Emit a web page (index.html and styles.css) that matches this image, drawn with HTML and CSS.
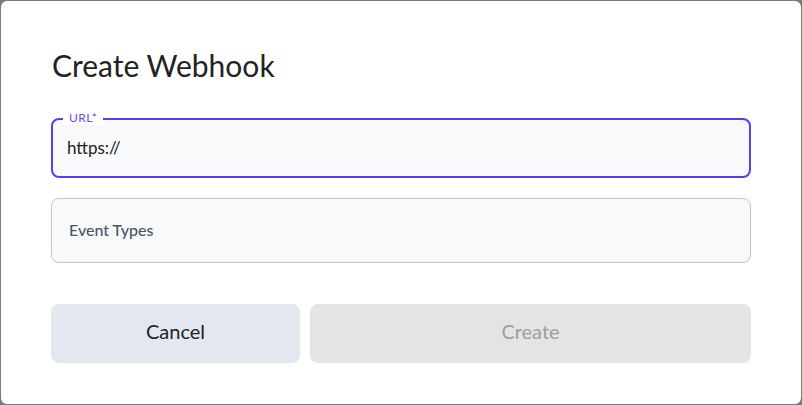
FILE: index.html
```html
<!DOCTYPE html>
<html lang="en">
<head>
<meta charset="utf-8">
<title>Create Webhook</title>
<link rel="stylesheet" href="styles.css">
</head>
<body>
<div class="modal">
  <h1 class="title">Create Webhook</h1>
  <div class="field field-focused">
    <span class="field-label">URL*</span>
    <span class="field-value">https://</span>
  </div>
  <div class="field field-select">
    <span class="field-placeholder">Event Types</span>
  </div>
  <div class="actions">
    <button class="btn btn-cancel">Cancel</button>
    <button class="btn btn-create" disabled>Create</button>
  </div>
</div>
</body>
</html>
```
FILE: styles.css
```css
html, body {
  margin: 0;
  padding: 0;
}
body {
  background: #7a7a7a;
  width: 802px;
  height: 405px;
  overflow: hidden;
  font-family: "Lato", "Open Sans", sans-serif;
}
.modal {
  margin: 1px 0 0 1px;
  width: 800px;
  height: 403px;
  background: #ffffff;
  border-radius: 6px;
  box-sizing: border-box;
  padding: 44px 50px 0 50px;
  display: flex;
  flex-direction: column;
}
.title {
  margin: 0 0 0 1px;
  font-size: 30px;
  line-height: 40px;
  font-weight: 400;
  color: #222222;
}
.field {
  position: relative;
  box-sizing: border-box;
  width: 700px;
  background: #f8f9fb;
  border-radius: 8px;
  display: flex;
  align-items: center;
}
.field-focused {
  margin-top: 33px;
  height: 60px;
  border: 2px solid #5b3cf5;
  padding-left: 14px;
  padding-bottom: 2px;
}
.field-label {
  position: absolute;
  left: 10px;
  top: -9px;
  padding: 0 6px 0 6px;
  background: #ffffff;
  font-size: 12px;
  line-height: 14px;
  color: #6a4cf2;
  letter-spacing: 0.5px;
}
.field-value {
  font-size: 17px;
  color: #222222;
}
.field-select {
  margin-top: 20px;
  height: 65px;
  border: 1px solid #c4c4c4;
  padding-left: 17px;
  padding-bottom: 2px;
}
.field-placeholder {
  font-size: 16px;
  color: #4a5568;
  font-weight: 500;
}
.actions {
  margin-top: 41px;
  display: flex;
  gap: 10px;
  width: 700px;
}
.btn {
  height: 59px;
  border: none;
  border-radius: 8px;
  font-family: inherit;
  font-size: 20px;
  padding: 0 0 5px 0;
}
.btn-cancel {
  width: 249px;
  background: #e2e7f0;
  color: #222222;
}
.btn-create {
  flex: 1;
  background: #e4e4e4;
  color: #9e9e9e;
}
```
